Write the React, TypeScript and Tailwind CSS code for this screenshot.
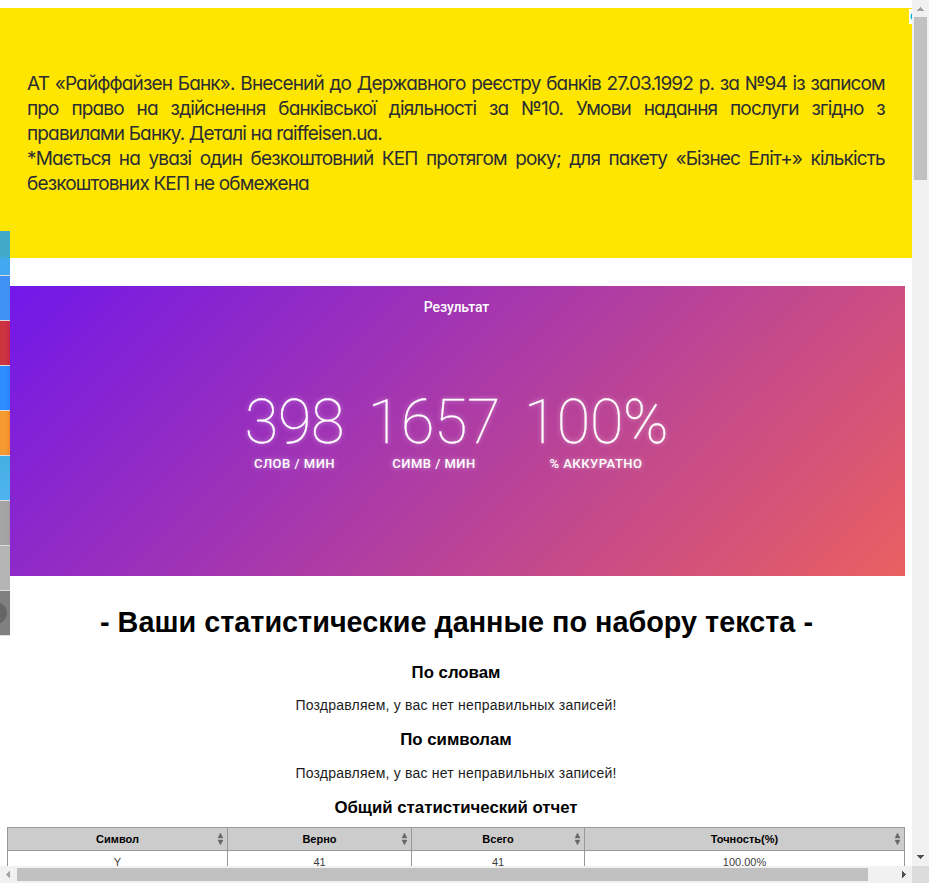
const bannerLines = [
  { text: 'АТ «Райффайзен Банк». Внесений до Державного реєстру банків 27.03.1992 р. за №94 із записом', full: true },
  { text: 'про право на здійснення банківської діяльності за №10. Умови надання послуги згідно з', full: true },
  { text: 'правилами Банку. Деталі на raiffeisen.ua.', full: false },
  { text: '*Мається на увазі один безкоштовний КЕП протягом року; для пакету «Бізнес Еліт+» кількість', full: true },
  { text: 'безкоштовних КЕП не обмежена', full: false },
];

const shareColors = [
  'bg-linear-to-b from-[#43a9c8] from-55% to-[#42a9f0] to-65%',
  'bg-[#4090f5]',
  'bg-linear-to-r from-[#cc3440] from-60% to-[#c9204a]',
  'bg-linear-to-r from-[#2d8cff] from-60% to-[#2d80fa]',
  'bg-linear-to-r from-[#f59a30] from-60% to-[#f5842c]',
  'bg-linear-to-b from-[#45aee0] to-[#4eb4f0]',
  'bg-linear-to-r from-[#a4a4a4] from-60% to-[#a599a4]',
  'bg-[#b5b5b5]',
  'bg-[#808080]',
];

const stats = [
  { value: '398', label: 'СЛОВ / МИН', box: 'w-[100px]' },
  { value: '1657', label: 'СИМВ / МИН', box: 'w-[135px]' },
  { value: '100%', label: '% АККУРАТНО', box: 'w-[145px]' },
];

const columns = [
  { title: 'Символ', value: 'Y', width: 'w-[220px]' },
  { title: 'Верно', value: '41', width: 'w-[184px]' },
  { title: 'Всего', value: '41', width: 'w-[173px]' },
  { title: 'Точность(%)', value: '100.00%', width: 'w-[320px]' },
];

function Banner() {
  return (
    <section className="mt-2 h-[250px] shrink-0 bg-[#ffe600] pl-[27px] pt-[63px] text-[#2b2d33]">
      <div className="w-[858px] font-[Inter,sans-serif] text-[19px] leading-[25px] tracking-[-0.85px] [font-feature-settings:'cv11']">
        {bannerLines.map((line) => (
          <p key={line.text} className={line.full ? 'flex justify-between whitespace-nowrap' : 'whitespace-nowrap'}>
            {line.full ? line.text.split(' ').map((word, i) => <span key={i}>{word}</span>) : line.text}
          </p>
        ))}
      </div>
    </section>
  );
}

function Result() {
  return (
    <section className="ml-2 mt-7 flex h-[290px] w-[897px] shrink-0 flex-col items-center bg-[linear-gradient(135deg,#7117ea,#ea6060)] font-[Roboto,sans-serif] text-white">
      <h2 className="mt-3 text-[14px] leading-[18px] font-medium tracking-[-0.1px]">Результат</h2>
      <div className="mt-[69px] flex gap-[22px] [text-shadow:0_0_5px_rgba(255,255,255,0.5)]">
        {stats.map((s) => (
          <div key={s.value} className={`flex flex-col items-center ${s.box}`}>
            <div className="text-[61px] leading-[74px] font-thin tracking-[-0.3px] [-webkit-text-stroke:0.3px_white]">{s.value}</div>
            <div className="-mt-1 text-[13px] leading-[18px] font-medium tracking-[0.5px] whitespace-nowrap">{s.label}</div>
          </div>
        ))}
      </div>
    </section>
  );
}

function Sorter() {
  return (
    <svg className="mr-[3px] h-[12px] w-[7px] shrink-0" viewBox="0 0 7 12">
      <path d="M1 5 L3.5 0 L6 5Z M1 7 L3.5 12 L6 7Z" fill="#666" stroke="#666" strokeWidth="0.4" />
    </svg>
  );
}

function Report() {
  return (
    <section className="flex flex-col items-center font-['Liberation_Sans',Arial,sans-serif] text-black">
      <h1 className="mt-[28px] pl-px text-[28.8px] leading-[36px] font-bold">- Ваши статистические данные по набору текста -</h1>
      <h3 className="mt-[23px] text-[16.8px] leading-[20px] font-bold">По словам</h3>
      <p className="mt-[12px] text-[14px] leading-[20px] tracking-[0.21px] text-[#1c1c1c]">Поздравляем, у вас нет неправильных записей!</p>
      <h3 className="mt-[15px] text-[16.8px] leading-[20px] font-bold">По символам</h3>
      <p className="mt-[13px] text-[14px] leading-[20px] tracking-[0.21px] text-[#1c1c1c]">Поздравляем, у вас нет неправильных записей!</p>
      <h3 className="mt-[15px] text-[16.8px] leading-[20px] font-bold">Общий статистический отчет</h3>
      <div className="mt-[9px] w-[898px] border-l border-[#999] text-[11px]">
        <div className="flex h-[24px] border-y border-[#999] bg-[#ccc]">
          {columns.map((c) => (
            <div key={c.title} className={`flex items-center border-r border-[#999] ${c.width}`}>
              <span className="flex-1 pl-[10px] text-center font-bold">{c.title}</span>
              <Sorter />
            </div>
          ))}
        </div>
        <div className="flex h-[24px]">
          {columns.map((c) => (
            <div key={c.title} className={`border-r border-[#999] text-center leading-[23px] text-[#3d3d3d] ${c.width}`}>
              {c.value}
            </div>
          ))}
        </div>
      </div>
    </section>
  );
}

function ShareStrip() {
  return (
    <nav className="absolute top-[230px] left-0 w-[10px] pt-px">
      {shareColors.map((color, i) => (
        <div key={i} className={`h-[45px] overflow-hidden border-b border-[#dcdcdc] ${color}`}>
          {i === 8 && <div className="mt-[11px] -ml-[15px] size-[22px] rounded-full bg-[#666]" />}
        </div>
      ))}
    </nav>
  );
}

export default function App() {
  return (
    <div className="flex h-[883px] w-[929px] flex-col overflow-hidden bg-white">
      <div className="flex h-[866px] shrink-0">
        <main className="relative flex w-[912px] shrink-0 flex-col overflow-hidden">
          <Banner />
          <Result />
          <Report />
          <ShareStrip />
          <div className="absolute top-[9px] right-0 h-[15px] w-[3px] overflow-hidden bg-white">
            <svg className="h-[15px] w-[3px]" viewBox="0 0 3 15">
              <path d="M3 4 Q0 7.5 3 11" fill="#00aecd" />
            </svg>
          </div>
        </main>
        <div className="flex w-[17px] flex-col items-center bg-[#f1f1f1]">
          <svg className="size-[17px] shrink-0" viewBox="0 0 17 17" shapeRendering="crispEdges">
            <path d="M5 11 L8.5 7 L12 11Z" fill="#a3a3a3" />
          </svg>
          <div className="h-[163px] w-[13px] bg-[#c1c1c1]" />
          <svg className="mt-auto size-[17px] shrink-0" viewBox="0 0 17 17" shapeRendering="crispEdges">
            <path d="M5 6 L8.5 10 L12 6Z" fill="#505050" />
          </svg>
        </div>
      </div>
      <div className="flex h-[17px] items-center bg-[#f1f1f1]">
        <svg className="size-[17px] shrink-0" viewBox="0 0 17 17" shapeRendering="crispEdges">
          <path d="M10 5 L6 8.5 L10 12Z" fill="#a3a3a3" />
        </svg>
        <div className="h-[13px] w-[851px] bg-[#c1c1c1]" />
        <svg className="ml-auto size-[17px] shrink-0" viewBox="0 0 17 17" shapeRendering="crispEdges">
          <path d="M7 5 L11 8.5 L7 12Z" fill="#505050" />
        </svg>
        <div className="size-[17px] shrink-0 bg-[#dcdcdc]" />
      </div>
    </div>
  );
}
